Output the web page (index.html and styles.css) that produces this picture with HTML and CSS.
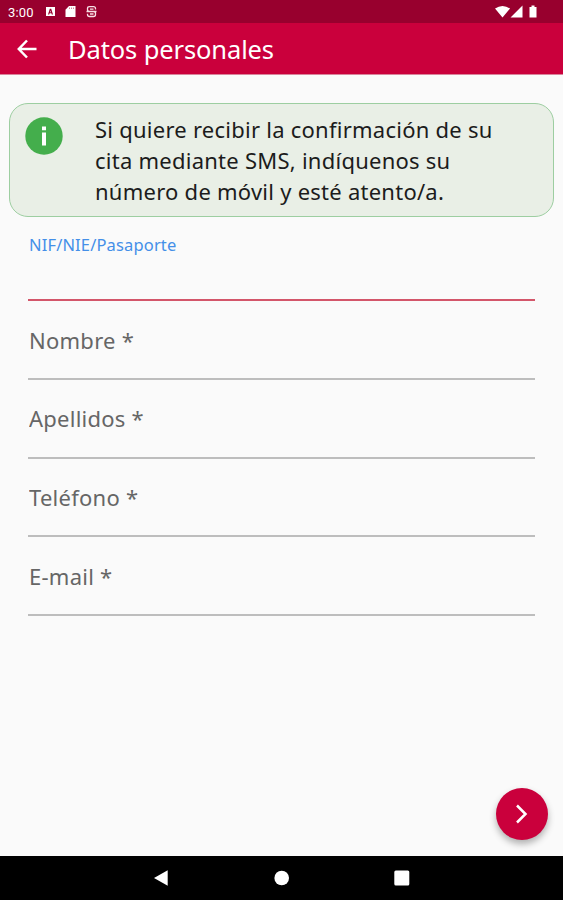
FILE: index.html
```html
<!DOCTYPE html>
<html lang="es">
<head>
    <meta charset="UTF-8">
    <meta name="viewport" content="width=device-width, initial-scale=1.0">
    <title>Datos personales</title>
    <link rel="stylesheet" href="styles.css">
</head>
<body>
    <div class="status-bar">
        <span class="clock">3:00</span>
        <svg class="status-left" width="54" height="14" viewBox="0 0 54 14">
            <path fill="#fff" fill-rule="evenodd" d="M1 2h9v9H1zM3 9.500h1.200l.4-1.200h1.800l.4 1.200H8L6.200 3.800H4.800zM5 7.200l.5-1.700.5 1.700z"/>
            <path fill="#fff" d="M24 1h6.500v11H20.500V4.700z"/>
            <path stroke="#d9849b" d="M24.500 2.500v1.500M26.500 2.500v1.500M28.500 2.500v1.500"/>
            <path fill="none" stroke="#f7dfe5" stroke-width="1.300" d="M50.500 4.500V3.500Q50.500 1.700 48.500 1.700H44.500Q42.500 1.700 42.500 3.500V4.500Q42.500 6.500 44.500 6.500H48.500Q50.500 6.500 50.500 8.500V9.500Q50.500 11.500 48.500 11.500H44.500Q42.500 11.500 42.500 9.500V8.800M41.500 6.500h10M45 4.200h3.500M45 9h3.500"/>
        </svg>
        <svg class="status-right" width="44" height="14" viewBox="0 0 44 14">
            <path fill="#fff" d="M0 3.600Q7.500-1.800 15 3.600L7.500 12.500zM27.500 .5v12H15.500zM34.500 2h2V.5h3V2h2v10.500h-7z"/>
        </svg>
    </div>
    <header class="app-bar">
        <a href="#" class="back" aria-label="Volver">
            <svg width="20" height="20" viewBox="0 0 20 20">
                <path d="M19.500 10H2M10 1.500L1.800 10 10 18.500"/>
            </svg>
        </a>
        <h1>Datos personales</h1>
    </header>

    <main>
        <div class="info-box">
            <svg class="info-icon" width="38" height="38" viewBox="0 0 38 38">
                <circle cx="19" cy="19" r="18.700" fill="#44ae4c"/>
                <path fill="#fff" d="M17 9.500h4v3.800h-4zM17 15.500h4v13h-4z"/>
            </svg>
            <p>Si quiere recibir la confirmación de su cita mediante SMS, indíquenos su número de móvil y esté atento/a.</p>
        </div>
        <form id="datos-form">
            <div class="field active">
                <label for="documento">NIF/NIE/Pasaporte</label>
                <input type="text" id="documento">
            </div>
            <div class="field">
                <input type="text" id="nombre" placeholder="Nombre *">
            </div>
            <div class="field">
                <input type="text" id="apellidos" placeholder="Apellidos *">
            </div>
            <div class="field">
                <input type="tel" id="telefono" placeholder="Teléfono *">
            </div>
            <div class="field">
                <input type="email" id="email" placeholder="E-mail *">
            </div>
        </form>
        <button type="submit" form="datos-form" class="next-button" aria-label="Siguiente">
            <svg width="14" height="20" viewBox="0 0 14 20">
                <path d="M2 1.500L10.500 10 2 18.500"/>
            </svg>
        </button>
    </main>

    <nav class="nav-bar">
        <svg width="16" height="16" viewBox="0 0 16 16"><path d="M0 8L13.700 .3v15.400z"/></svg>
        <svg width="16" height="16" viewBox="0 0 16 16"><circle cx="7.700" cy="8" r="7.300"/></svg>
        <svg width="16" height="16" viewBox="0 0 16 16"><rect x=".3" y=".5" width="15" height="15" rx="1.500"/></svg>
    </nav>
</body>
</html>
```

FILE: styles.css
```css
:root {
    --primary-color: #ca003c;
    --primary-dark: #98002e;
    --bg-color: #fafafa;
    --label-color: #666;
    --line-color: #bdbdbd;
}
* { box-sizing: border-box; }
body {
    margin: 0;
    height: 100vh;
    display: flex;
    flex-direction: column;
    background-color: var(--bg-color);
    font-family: "Noto Sans", sans-serif;
    overflow: hidden;
}

/* --- Status bar --- */
.status-bar {
    height: 23px;
    flex: none;
    display: flex;
    align-items: center;
    padding: 1px 24px 0 8px;
    background-color: var(--primary-dark);
    color: #fff;
}
.clock {
    width: 37px;
    font-family: Roboto, sans-serif;
    font-size: 13px;
    letter-spacing: 0.2px;
}
.status-right { margin-left: auto; }

/* --- App bar --- */
.app-bar {
    height: 52px;
    flex: none;
    display: flex;
    align-items: center;
    padding-left: 17px;
    background-color: var(--primary-color);
    border-bottom: 1px solid #d9849b;
    color: #fff;
}
.back {
    display: flex;
    width: 51px;
}
.back path, .next-button path {
    fill: none;
    stroke: #fff;
    stroke-width: 2.5;
}
.app-bar h1 {
    margin: 0;
    font-size: 25.500px;
    font-weight: 400;
    line-height: 34px;
    letter-spacing: -0.12px;
}

/* --- Content --- */
main {
    flex: 1;
    display: flex;
    flex-direction: column;
    padding: 28px 9px 0;
}
.info-box {
    display: flex;
    height: 114px;
    padding: 10px 40px 0 15px;
    background-color: #e9efe6;
    border: 1px solid #9dcea1;
    border-radius: 19px;
}
.info-icon {
    flex: none;
    margin: 3px 32px 0 0;
}
.info-box p {
    margin: 0;
    color: #1c1c1c;
    font-size: 22px;
    line-height: 31px;
    letter-spacing: 0.25px;
}

/* --- Form --- */
#datos-form { padding: 0 19px; }
.field {
    height: 78.800px;
    padding-top: 20px;
    border-bottom: 2px solid var(--line-color);
}
.field input {
    display: block;
    width: 100%;
    height: 37px;
    padding: 0 0 0 1px;
    border: 0;
    background: none;
    outline: none;
    font: 22px "Noto Sans", sans-serif;
    letter-spacing: 0.25px;
}
.field input::placeholder {
    color: var(--label-color);
    opacity: 1;
}
.field.active {
    height: 84px;
    padding-top: 16px;
    border-color: #d3566a;
}
.field.active label {
    display: block;
    padding-left: 1px;
    color: #448fe8;
    font-size: 16.500px;
    line-height: 24px;
    letter-spacing: 0.15px;
}

.next-button {
    display: flex;
    align-items: center;
    justify-content: center;
    width: 52px;
    height: 52px;
    margin: auto 6px 16px auto;
    padding: 0;
    border: 0;
    border-radius: 50%;
    background-color: var(--primary-color);
    box-shadow: 0 4px 7px rgba(0, 0, 0, 0.3);
}

/* --- Navigation bar --- */
.nav-bar {
    height: 44px;
    flex: none;
    display: flex;
    align-items: center;
    justify-content: center;
    gap: 104px;
    background-color: #000;
}
.nav-bar svg { fill: #fff; }
```
